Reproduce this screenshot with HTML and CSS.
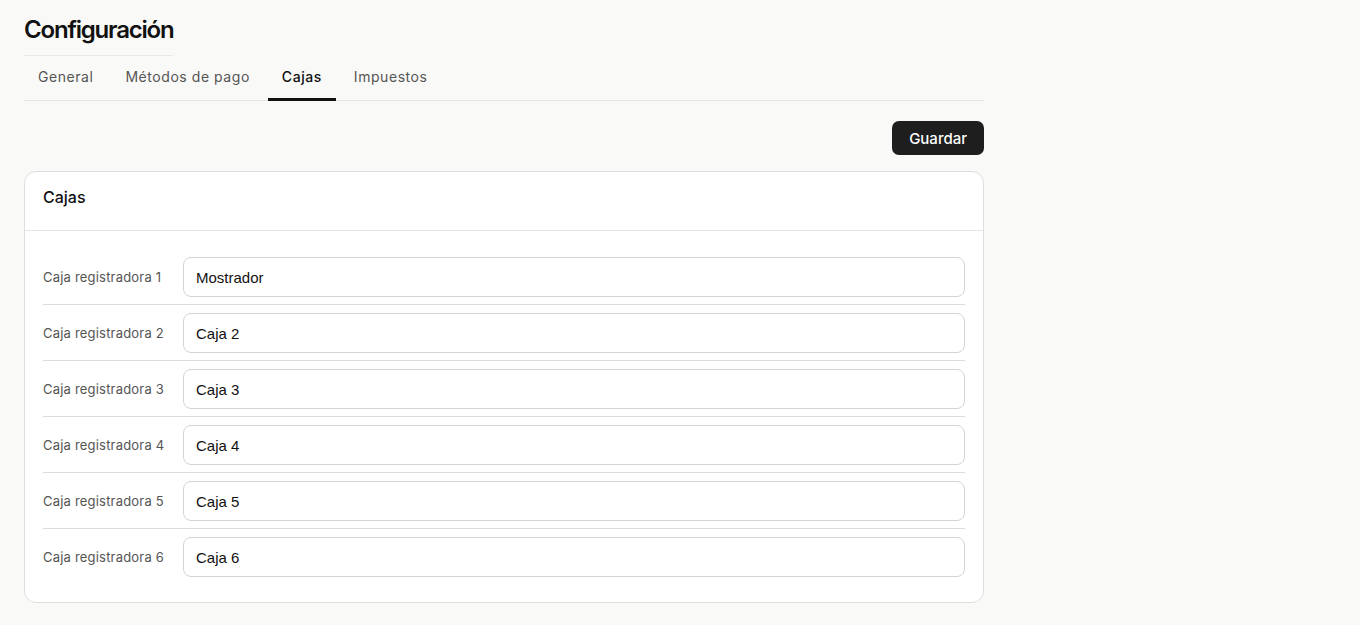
FILE: index.html
```html
<!DOCTYPE html>
<html lang="es">
<head>
    <meta charset="UTF-8">
    <meta name="viewport" content="width=device-width, initial-scale=1.0">
    <title>Configuración</title>
    <link rel="stylesheet" href="styles.css">
</head>
<body>
    <div class="pagina">
        <h1 class="titulo">Configuración</h1>

        <!-- Pestañas de configuración -->
        <nav class="pestanas">
            <a href="#" class="pestana">General</a>
            <a href="#" class="pestana">Métodos de pago</a>
            <a href="#" class="pestana activa">Cajas</a>
            <a href="#" class="pestana">Impuestos</a>
        </nav>

        <div class="acciones">
            <button class="boton-guardar">Guardar</button>
        </div>

        <!-- Tarjeta de cajas registradoras -->
        <div class="tarjeta">
            <div class="tarjeta-cabecera">
                <h2>Cajas</h2>
            </div>
            <div class="tarjeta-cuerpo">
                <div class="fila">
                    <label class="etiqueta" for="caja1">Caja registradora 1</label>
                    <input type="text" id="caja1" class="campo" value="Mostrador">
                </div>
                <div class="fila">
                    <label class="etiqueta" for="caja2">Caja registradora 2</label>
                    <input type="text" id="caja2" class="campo" value="Caja 2">
                </div>
                <div class="fila">
                    <label class="etiqueta" for="caja3">Caja registradora 3</label>
                    <input type="text" id="caja3" class="campo" value="Caja 3">
                </div>
                <div class="fila">
                    <label class="etiqueta" for="caja4">Caja registradora 4</label>
                    <input type="text" id="caja4" class="campo" value="Caja 4">
                </div>
                <div class="fila">
                    <label class="etiqueta" for="caja5">Caja registradora 5</label>
                    <input type="text" id="caja5" class="campo" value="Caja 5">
                </div>
                <div class="fila">
                    <label class="etiqueta" for="caja6">Caja registradora 6</label>
                    <input type="text" id="caja6" class="campo" value="Caja 6">
                </div>
            </div>
        </div>
    </div>
</body>
</html>
```

FILE: styles.css
```css
body {
    margin: 0;
    padding: 0;
    background-color: #f9f9f7; /* Fondo gris muy claro */
    color: #111;
    font-family: Inter, "Liberation Sans", sans-serif;
}
.pagina {
    width: 960px;
    padding: 13px 24px 20px;
}
.titulo {
    display: inline-block;
    margin: 0;
    padding-bottom: 8px;
    font-size: 24px;
    line-height: 34px;
    font-weight: 600;
    letter-spacing: -1.2px;
    border-bottom: 1px solid #e9e9e7;
}
.pestanas {
    display: flex;
    gap: 4px;
    height: 44px;
    border-bottom: 1px solid #e4e4e2;
}
.pestana {
    display: flex;
    align-items: center;
    padding: 0 14px;
    font-size: 14px;
    line-height: 18px;
    letter-spacing: 0.55px;
    color: #555;
    text-decoration: none;
    border-bottom: 3px solid transparent;
    margin-bottom: -1px;
}
.pestana.activa {
    color: #111;
    font-weight: 500;
    border-bottom-color: #111;
}
.acciones {
    display: flex;
    justify-content: flex-end;
    margin-top: 20px;
    margin-bottom: 16px;
}
.boton-guardar {
    height: 34px;
    padding: 0 17px;
    border: none;
    border-radius: 7px;
    background-color: #1e1e1e;
    color: #fff;
    font-family: Inter, "Liberation Sans", sans-serif;
    font-size: 15px;
    font-weight: 500;
    cursor: pointer;
}
.tarjeta {
    background-color: #fff;
    border: 1px solid #dededc;
    border-radius: 12px;
}
.tarjeta-cabecera {
    height: 59px;
    box-sizing: border-box;
    padding: 15px 18px 0;
    border-bottom: 1px solid #e4e4e2;
}
.tarjeta-cabecera h2 {
    margin: 0;
    font-size: 16px;
    line-height: 20px;
    font-weight: 500;
}
.tarjeta-cuerpo {
    padding: 18px 18px 17px;
}
.fila {
    display: flex;
    align-items: center;
    padding: 8px 0 7px;
    border-bottom: 1px solid #dcdcda;
}
.fila:last-child {
    border-bottom: none;
    padding-bottom: 8px;
}
.etiqueta {
    width: 140px;
    flex-shrink: 0;
    font-size: 13px;
    color: #555;
    letter-spacing: 0.2px;
}
.campo {
    flex: 1;
    height: 40px;
    box-sizing: border-box;
    padding: 0 12px;
    border: 1px solid #d4d4d2;
    border-radius: 8px;
    font-family: "Liberation Sans", Arial, sans-serif;
    font-size: 15px;
    color: #111;
    background-color: #fff;
}
```
